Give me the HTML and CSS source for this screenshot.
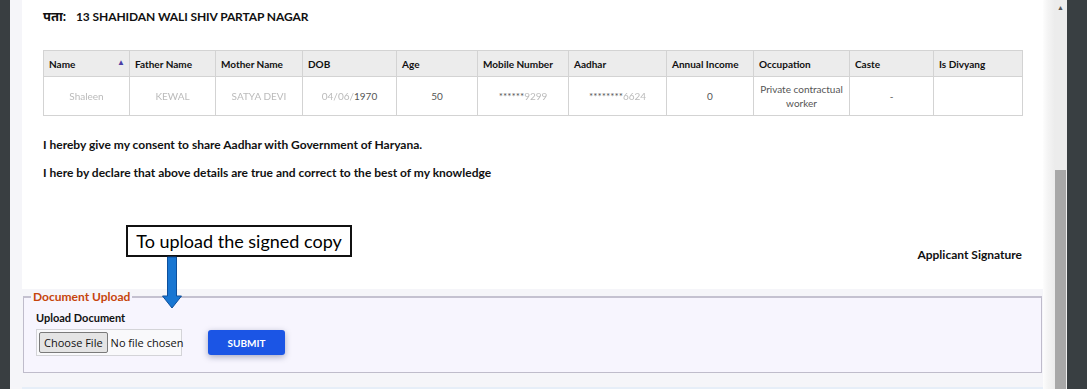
FILE: index.html
```html
<!DOCTYPE html>
<html>
<head>
<meta charset="utf-8">
<link rel="stylesheet" href="styles.css">
</head>
<body>
<div class="frame">
  <div class="edge-left"></div>
  <div class="page">
    <div class="card">
      <div class="address"><span class="addr-label">पता:</span><span class="addr-value">13 SHAHIDAN WALI SHIV PARTAP NAGAR</span></div>
      <table class="grid">
        <colgroup>
          <col class="w86"><col class="w86"><col class="w87"><col class="w94"><col class="w81"><col class="w91"><col class="w98"><col class="w87"><col class="w96"><col class="w84"><col class="w89">
        </colgroup>
        <thead>
          <tr>
            <th>Name<span class="sort">▲</span></th>
            <th>Father Name</th>
            <th>Mother Name</th>
            <th>DOB</th>
            <th>Age</th>
            <th>Mobile Number</th>
            <th>Aadhar</th>
            <th>Annual Income</th>
            <th>Occupation</th>
            <th>Caste</th>
            <th>Is Divyang</th>
          </tr>
        </thead>
        <tbody>
          <tr>
            <td><span class="blur">Shaleen</span></td>
            <td><span class="blur">KEWAL</span></td>
            <td><span class="blur">SATYA DEVI</span></td>
            <td><span class="blur">04/06/</span>1970</td>
            <td>50</td>
            <td>******<span class="blur">9299</span></td>
            <td>********<span class="blur">6624</span></td>
            <td>0</td>
            <td>Private contractual<br>worker</td>
            <td>-</td>
            <td></td>
          </tr>
        </tbody>
      </table>
      <p class="decl decl-first">I hereby give my consent to share Aadhar with Government of Haryana.</p>
      <p class="decl">I here by declare that above details are true and correct to the best of my knowledge</p>
      <div class="sign">Applicant Signature</div>
      <div class="note">To upload the signed copy</div>
      <svg class="note-arrow" width="22" height="52" viewBox="0 0 22 52">
        <path d="M6.5 0 H15.5 V39 H20.5 L11 51 L1.5 39 H6.5 Z" fill="#1876d2" stroke="#0d4f9c" stroke-width="1"/>
      </svg>
    </div>
    <fieldset class="upload">
      <legend>Document Upload</legend>
      <div class="field-label">Upload Document</div>
      <div class="upload-row">
        <div class="file-box"><span class="file-btn">Choose File</span><span class="file-text">No file chosen</span></div>
        <button class="submit">SUBMIT</button>
      </div>
    </fieldset>
    <div class="bottom-line"></div>
  </div>
  <div class="gutter"></div>
  <div class="scrollbar">
    <span class="scroll-up">▲</span>
    <div class="thumb"></div>
  </div>
  <div class="edge-right"></div>
</div>
</body>
</html>
```
FILE: styles.css
```css
html, body {
  margin: 0;
  padding: 0;
  height: 389px;
  overflow: hidden;
}
body {
  font-family: "Lato", "Noto Sans", "Noto Sans Devanagari", sans-serif;
  color: #111;
}
.frame {
  display: flex;
  width: 1087px;
  height: 389px;
}
.edge-left {
  width: 10px;
  background: #393e41;
  flex: none;
}
.edge-right {
  width: 20px;
  background: #393f42;
  flex: none;
}
.page {
  width: 1033px;
  min-width: 0;
  flex: none;
  box-sizing: border-box;
  background: #f5f5f9;
  padding: 0 0 0 12px;
  display: flex;
  flex-direction: column;
}
.gutter {
  width: 11px;
  flex: none;
  background: linear-gradient(to right, #fdfdfd 0, #f4f4f4 5px, #ededed 100%);
}
.scrollbar {
  width: 13px;
  flex: none;
  background: #ececec;
  display: flex;
  flex-direction: column;
  align-items: center;
}
.scroll-up {
  font-size: 7px;
  color: #555;
  margin-top: 3px;
  line-height: 8px;
}
.thumb {
  margin-top: 159px;
  width: 11px;
  flex: 1;
  background: #a8a8a8;
}
.card {
  position: relative;
  background: #fff;
  height: 289px;
  box-sizing: border-box;
  padding: 7px 21px 0 21px;
}
.address {
  font-size: 12px;
  font-weight: 700;
  line-height: 18px;
  height: 18px;
  letter-spacing: -0.1px;
}
.addr-label {
  display: inline-block;
  width: 33px;
  font-size: 13px;
}
.grid {
  margin-top: 25px;
  border-collapse: collapse;
  width: 979px;
  table-layout: fixed;
  font-size: 10px;
}
.w86 { width: 86px; }
.w87 { width: 87px; }
.w94 { width: 94px; }
.w81 { width: 81px; }
.w91 { width: 91px; }
.w98 { width: 98px; }
.w96 { width: 96px; }
.w84 { width: 84px; }
.w89 { width: 89px; }
.grid th, .grid td {
  border: 1px solid #d3d3d3;
}
.grid th {
  background: #ececec;
  height: 25px;
  text-align: left;
  font-weight: 700;
  padding: 0 5px;
  position: relative;
  color: #111;
}
.grid td {
  height: 38px;
  text-align: center;
  color: #555;
  padding: 0 4px;
  line-height: 14px;
}
.sort {
  position: absolute;
  right: 4px;
  top: 6px;
  font-size: 8px;
  color: #4b3fa6;
}
.blur {
  color: #bbb;
  filter: blur(0.6px);
}
.decl {
  margin: 0;
  font-size: 12px;
  font-weight: 700;
  line-height: 18px;
}
.decl-first {
  margin-top: 20px;
}
.decl + .decl {
  margin-top: 10px;
}
.sign {
  margin-top: 64px;
  text-align: right;
  font-size: 12px;
  font-weight: 700;
  line-height: 18px;
}
.note {
  position: absolute;
  left: 104px;
  top: 225px;
  width: 222px;
  height: 28px;
  border: 2px solid #111;
  background: #fff;
  font-family: "Lato", "Open Sans", sans-serif;
  font-size: 18px;
  line-height: 28px;
  text-align: center;
  color: #000;
}
.note-arrow {
  position: absolute;
  left: 139px;
  top: 257px;
  overflow: visible;
  z-index: 2;
}
.upload {
  margin: 0 1px 0 1px;
  padding: 0 12px 16px 12px;
  border: 1px solid #bfbccb;
  border-top: 2px solid #c4c1d0;
  background: #f7f5fe;
  min-inline-size: 0;
}
.upload legend {
  padding: 0 2px;
  margin-left: -5px;
  color: #c6450b;
  font-size: 12px;
  font-weight: 700;
  line-height: 16px;
}
.field-label {
  font-size: 11px;
  font-weight: 700;
  margin-top: 5px;
  line-height: 16px;
}
.upload-row {
  display: flex;
  align-items: center;
  margin-top: 3px;
}
.file-box {
  display: flex;
  align-items: center;
  width: 146px;
  height: 27px;
  box-sizing: border-box;
  border: 1px solid #d4d4d8;
  padding-left: 2px;
  font-size: 11px;
  white-space: nowrap;
  background: #f9f9fb;
  font-family: "Open Sans", sans-serif;
}
.file-btn {
  background: #e4e4e4;
  border: 1px solid #7a7a7a;
  border-radius: 2px;
  padding: 0 4px;
  height: 19px;
  line-height: 19px;
  color: #111;
}
.file-text {
  margin-left: 3px;
}
.submit {
  margin-left: 26px;
  width: 77px;
  height: 25px;
  border: none;
  border-radius: 3px;
  background: #1b55e5;
  color: #fff;
  font-family: "Lato", sans-serif;
  font-weight: 700;
  font-size: 10px;
  box-shadow: 0 2px 6px rgba(20, 30, 80, 0.35);
}
.bottom-line {
  flex: 1;
  border-bottom: 2px solid #e6eef8;
}
```
